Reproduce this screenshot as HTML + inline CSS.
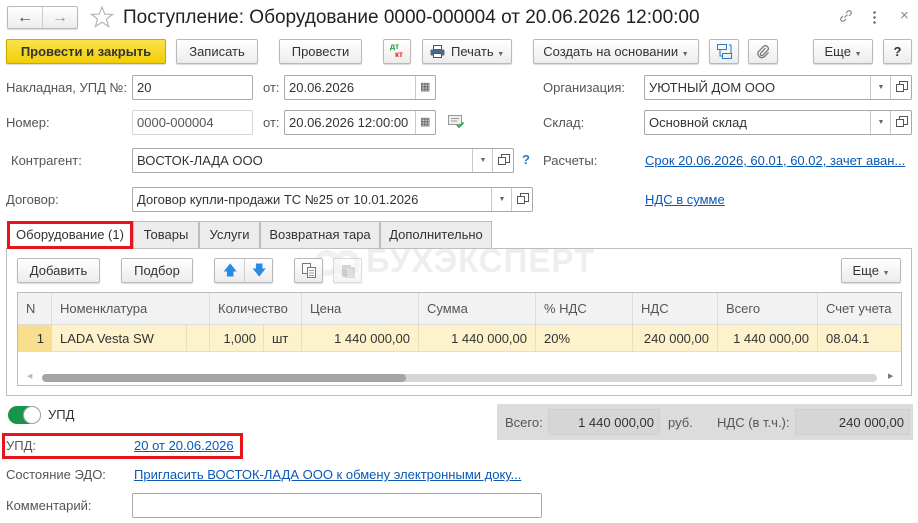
<!DOCTYPE html>
<html><head><meta charset="utf-8"><style>
*{box-sizing:border-box;margin:0;padding:0}
body{width:918px;height:523px;background:#fff;font-family:"Liberation Sans",Arial,sans-serif;font-size:13px;color:#333;position:relative;overflow:hidden}
.a{position:absolute}
.btn{position:absolute;height:25px;border:1px solid #b9b9b9;border-radius:2px;background:linear-gradient(#fff,#ececec);box-shadow:0 1px 1px rgba(0,0,0,.15);text-align:center;line-height:23px;color:#333;font-size:13px}
.inp{position:absolute;height:25px;border:1px solid #a9a9a9;border-radius:2px;background:#fff;line-height:23px;padding-left:4px;color:#333}
.lbl{position:absolute;color:#555;line-height:16px}
.lnk{position:absolute;color:#0b58b5;text-decoration:underline;line-height:16px}
.sep{position:absolute;top:0;bottom:0;border-left:1px solid #c9c9c9}
.dd{position:absolute;top:0;width:20px;height:23px;text-align:center;font-size:7px;color:#666;line-height:23px}
.op{position:absolute;top:5px;width:9px;height:9px;border:1px solid #555}
.op:after{content:"";position:absolute;left:-4px;top:2px;width:6px;height:6px;border:1px solid #555;background:#fff}
.tab{position:absolute;top:221px;height:27px;border:1px solid #bdbdbd;border-bottom:none;background:#ececec;line-height:26px;text-align:center;color:#333}
.th{position:absolute;top:0;height:31px;line-height:31px;padding-left:8px;color:#555;border-right:1px solid #dcdcdc}
.td{position:absolute;top:0;height:27px;line-height:27px;color:#333;border-right:1px solid #e9dfb8}
</style></head><body>

<!-- nav -->
<div class="btn" style="left:7px;top:6px;width:71px;height:23px"></div>
<div class="a" style="left:42px;top:7px;height:21px;border-left:1px solid #ccc"></div>
<div class="a" style="left:17px;top:7px;font-size:16px;color:#444;font-weight:bold;line-height:21px">&#8592;</div>
<div class="a" style="left:52px;top:7px;font-size:16px;color:#999;font-weight:bold;line-height:21px">&#8594;</div>
<svg class="a" style="left:90px;top:6px" width="24" height="22" viewBox="0 0 24 22"><path d="M12 1 L14.8 8.2 L22.5 8.4 L16.4 13.1 L18.6 20.5 L12 16.2 L5.4 20.5 L7.6 13.1 L1.5 8.4 L9.2 8.2 Z" fill="none" stroke="#b5b5b5" stroke-width="1.2"/></svg>
<div class="a" style="left:123px;top:6px;font-size:19px;color:#222;line-height:24px">Поступление: Оборудование 0000-000004 от 20.06.2026 12:00:00</div>
<svg class="a" style="left:838px;top:8px" width="16" height="16" viewBox="0 0 16 16"><path d="M6.5 9.5 L9.5 6.5 M5 8 L3 10 A2.2 2.2 0 0 0 6 13 L8 11 M11 8 L13 6 A2.2 2.2 0 0 0 10 3 L8 5" fill="none" stroke="#888" stroke-width="1.2"/></svg>
<div class="a" style="left:873px;top:10px;width:3px;height:14px;background:radial-gradient(circle,#777 1.2px,transparent 1.5px) 0 0/3px 5px"></div>
<div class="a" style="left:900px;top:7px;font-size:15px;color:#888">×</div>

<!-- toolbar -->
<div class="btn" style="left:6px;top:39px;width:160px;background:linear-gradient(#fbe44a,#f2cd08);border-color:#c9a900;font-weight:bold;color:#333">Провести и закрыть</div>
<div class="btn" style="left:176px;top:39px;width:82px">Записать</div>
<div class="btn" style="left:279px;top:39px;width:83px">Провести</div>
<div class="btn" style="left:383px;top:39px;width:28px"><span class="a" style="left:6px;top:-5px;font-size:8px;color:#1a9a3a;font-weight:bold">дт</span><span class="a" style="left:11px;top:3px;font-size:8px;color:#d22;font-weight:bold">кт</span></div>
<div class="btn" style="left:422px;top:39px;width:90px;text-align:left;padding-left:28px">Печать <span style="font-size:7px;color:#666">▼</span>
<svg class="a" style="left:7px;top:5px" width="15" height="13" viewBox="0 0 15 13"><rect x="3.5" y="0.5" width="8" height="4" fill="#fff" stroke="#456"/><rect x="0.5" y="4.5" width="14" height="6" rx="1" fill="#4a6a8a"/><rect x="3.5" y="8.5" width="8" height="4" fill="#fff" stroke="#456"/></svg></div>
<div class="btn" style="left:533px;top:39px;width:166px">Создать на основании <span style="font-size:7px;color:#666">▼</span></div>
<div class="btn" style="left:709px;top:39px;width:30px"><svg class="a" style="left:7px;top:4px" width="16" height="15" viewBox="0 0 16 15"><rect x="0.5" y="0.5" width="9" height="5" fill="none" stroke="#2a7cc7"/><rect x="5.5" y="9.5" width="9" height="5" fill="none" stroke="#2a7cc7"/><path d="M3 6 V12 H5 M12 1 H14 V9" fill="none" stroke="#2a7cc7"/></svg></div>
<div class="btn" style="left:748px;top:39px;width:30px"><svg class="a" style="left:7px;top:4px" width="15" height="15" viewBox="0 0 15 15"><path d="M9.5 4 L4.5 9.5 A1.5 1.5 0 0 0 6.5 11.5 L12 6 A3 3 0 0 0 8 2 L2.5 7.5 A4 4 0 0 0 8 13 L12.5 8.5" fill="none" stroke="#777" stroke-width="1.3"/></svg></div>
<div class="btn" style="left:813px;top:39px;width:60px">Еще <span style="font-size:7px;color:#666">▼</span></div>
<div class="btn" style="left:883px;top:39px;width:29px;font-weight:bold">?</div>

<!-- row1 -->
<div class="lbl" style="left:6px;top:80px">Накладная, УПД №:</div>
<div class="inp" style="left:132px;top:75px;width:121px">20</div>
<div class="lbl" style="left:263px;top:80px">от:</div>
<div class="inp" style="left:284px;top:75px;width:152px">20.06.2026<div class="sep" style="left:130px"></div><span class="a" style="left:135px;top:0;font-size:11px;color:#555">▦</span></div>
<div class="lbl" style="left:543px;top:80px">Организация:</div>
<div class="inp" style="left:644px;top:75px;width:268px">УЮТНЫЙ ДОМ ООО<div class="sep" style="left:225px"></div><div class="dd" style="left:226px">▼</div><div class="sep" style="left:245px"></div><div class="op" style="left:254px"></div></div>

<!-- row2 -->
<div class="lbl" style="left:6px;top:115px">Номер:</div>
<div class="inp" style="left:132px;top:110px;width:121px;border-color:#d5d5d5;color:#555">0000-000004</div>
<div class="lbl" style="left:263px;top:115px">от:</div>
<div class="inp" style="left:284px;top:110px;width:152px">20.06.2026 12:00:00<div class="sep" style="left:130px"></div><span class="a" style="left:135px;top:0;font-size:11px;color:#555">▦</span></div>
<svg class="a" style="left:448px;top:115px" width="17" height="14" viewBox="0 0 17 14"><rect x="0.5" y="0.5" width="13" height="9" fill="#eee" stroke="#999"/><path d="M3 3.5H11M3 6H9" stroke="#999"/><path d="M9 10 L11 12 L15.5 7.5" fill="none" stroke="#2aa34a" stroke-width="1.8"/></svg>
<div class="lbl" style="left:543px;top:115px">Склад:</div>
<div class="inp" style="left:644px;top:110px;width:268px">Основной склад<div class="sep" style="left:225px"></div><div class="dd" style="left:226px">▼</div><div class="sep" style="left:245px"></div><div class="op" style="left:254px"></div></div>

<!-- row3 -->
<div class="lbl" style="left:11px;top:153px">Контрагент:</div>
<div class="inp" style="left:132px;top:148px;width:382px">ВОСТОК-ЛАДА ООО<div class="sep" style="left:339px"></div><div class="dd" style="left:340px">▼</div><div class="sep" style="left:359px"></div><div class="op" style="left:368px"></div></div>
<div class="a" style="left:522px;top:152px;color:#2a7cc7;font-weight:bold">?</div>
<div class="lbl" style="left:543px;top:153px">Расчеты:</div>
<div class="lnk" style="left:645px;top:153px">Срок 20.06.2026, 60.01, 60.02, зачет аван...</div>

<!-- row4 -->
<div class="lbl" style="left:6px;top:192px">Договор:</div>
<div class="inp" style="left:132px;top:187px;width:401px">Договор купли-продажи ТС №25 от 10.01.2026<div class="sep" style="left:358px"></div><div class="dd" style="left:359px">▼</div><div class="sep" style="left:378px"></div><div class="op" style="left:387px"></div></div>
<div class="lnk" style="left:645px;top:192px">НДС в сумме</div>

<!-- tabs -->
<div class="a" style="left:6px;top:248px;width:906px;height:148px;border:1px solid #bdbdbd"></div>
<div class="tab" style="left:133px;width:66px">Товары</div>
<div class="tab" style="left:199px;width:61px">Услуги</div>
<div class="tab" style="left:260px;width:120px">Возвратная тара</div>
<div class="tab" style="left:380px;width:112px">Дополнительно</div>
<div class="tab" style="left:7px;width:126px;height:28px;background:#fff;border:3px solid #e8141b;line-height:22px;color:#333">Оборудование (1)</div>

<!-- watermark -->
<svg class="a" style="left:312px;top:246px" width="50" height="32" viewBox="0 0 50 32"><circle cx="15" cy="17" r="10" fill="none" stroke="#f0f0f0" stroke-width="6"/><circle cx="35" cy="17" r="10" fill="none" stroke="#f0f0f0" stroke-width="6"/></svg>
<div class="a" style="left:366px;top:243px;font-size:33px;font-weight:bold;color:#eeeeee;letter-spacing:1px;line-height:36px">БУХЭКСПЕРТ</div>

<!-- inner toolbar -->
<div class="btn" style="left:17px;top:258px;width:83px">Добавить</div>
<div class="btn" style="left:121px;top:258px;width:72px">Подбор</div>
<div class="btn" style="left:214px;top:258px;width:59px"><div class="a" style="left:29px;top:0;height:23px;border-left:1px solid #ccc"></div><span class="a" style="left:8px;top:0;color:#2a8ae0;font-size:14px">&#129093;</span><span class="a" style="left:37px;top:0;color:#2a8ae0;font-size:14px">&#129095;</span></div>
<div class="btn" style="left:294px;top:258px;width:29px"><svg class="a" style="left:7px;top:4px" width="15" height="15" viewBox="0 0 15 15"><rect x="0.5" y="0.5" width="8" height="10" fill="#fff" stroke="#777"/><rect x="5.5" y="4.5" width="8" height="10" fill="#fff" stroke="#777"/><path d="M7 7.5H12M7 10H12M7 12.5H12" stroke="#999"/></svg></div>
<div class="btn" style="left:333px;top:258px;width:29px;opacity:.5"><svg class="a" style="left:7px;top:4px" width="15" height="15" viewBox="0 0 15 15"><rect x="1" y="2" width="9" height="12" fill="#aaa"/><rect x="5" y="5" width="8" height="10" fill="#ccc" stroke="#999"/></svg></div>
<div class="btn" style="left:841px;top:258px;width:60px">Еще <span style="font-size:7px;color:#666">▼</span></div>

<!-- table -->
<div class="a" style="left:17px;top:292px;width:885px;height:94px;border:1px solid #bcbcbc;overflow:hidden">
 <div class="a" style="left:0;top:0;width:885px;height:32px;background:#f2f2f2;border-bottom:1px solid #dcdcdc">
  <div class="th" style="left:0;width:34px">N</div>
  <div class="th" style="left:34px;width:158px">Номенклатура</div>
  <div class="th" style="left:192px;width:92px">Количество</div>
  <div class="th" style="left:284px;width:117px">Цена</div>
  <div class="th" style="left:401px;width:117px">Сумма</div>
  <div class="th" style="left:518px;width:97px">% НДС</div>
  <div class="th" style="left:615px;width:85px">НДС</div>
  <div class="th" style="left:700px;width:100px">Всего</div>
  <div class="th" style="left:800px;width:85px;border:none">Счет учета</div>
 </div>
 <div class="a" style="left:0;top:32px;width:885px;height:27px;background:#fcf2cc;border-bottom:1px solid #e6e0c8">
  <div class="td" style="left:0;width:34px;background:#f7df8f;text-align:right;padding-right:7px">1</div>
  <div class="td" style="left:34px;width:135px;padding-left:8px">LADA Vesta SW</div>
  <div class="td" style="left:169px;width:23px"></div>
  <div class="td" style="left:192px;width:54px;text-align:right;padding-right:7px">1,000</div>
  <div class="td" style="left:246px;width:38px;padding-left:8px">шт</div>
  <div class="td" style="left:284px;width:117px;text-align:right;padding-right:8px">1 440 000,00</div>
  <div class="td" style="left:401px;width:117px;text-align:right;padding-right:8px">1 440 000,00</div>
  <div class="td" style="left:518px;width:97px;padding-left:8px">20%</div>
  <div class="td" style="left:615px;width:85px;text-align:right;padding-right:8px">240 000,00</div>
  <div class="td" style="left:700px;width:100px;text-align:right;padding-right:8px">1 440 000,00</div>
  <div class="td" style="left:800px;width:85px;padding-left:8px;border:none">08.04.1</div>
 </div>
 <div class="a" style="left:24px;top:81px;width:835px;height:8px;border-radius:4px;background:#d6d6d6"></div>
 <div class="a" style="left:24px;top:81px;width:364px;height:8px;border-radius:4px;background:#a5a5a5"></div>
 <div class="a" style="left:9px;top:79px;font-size:7px;color:#bbb">◀</div>
 <div class="a" style="left:870px;top:79px;font-size:7px;color:#777">▶</div>
</div>

<!-- bottom -->
<div class="a" style="left:8px;top:406px;width:33px;height:18px;border-radius:9px;background:#17954a"></div>
<div class="a" style="left:23px;top:406px;width:18px;height:18px;border-radius:9px;background:#fff;border:1px solid #aaa"></div>
<div class="a" style="left:48px;top:407px;color:#333">УПД</div>
<div class="a" style="left:497px;top:404px;width:416px;height:36px;background:#dcdcdc"></div>
<div class="a" style="left:548px;top:409px;width:112px;height:26px;background:#d6d6d6;border:1px solid #cfcfcf;border-radius:2px"></div>
<div class="a" style="left:795px;top:409px;width:115px;height:26px;background:#d6d6d6;border:1px solid #cfcfcf;border-radius:2px"></div>
<div class="lbl" style="left:505px;top:415px">Всего:</div>
<div class="a" style="left:548px;top:415px;width:106px;text-align:right;color:#333">1 440 000,00</div>
<div class="lbl" style="left:668px;top:415px">руб.</div>
<div class="lbl" style="left:717px;top:415px">НДС (в т.ч.):</div>
<div class="a" style="left:795px;top:415px;width:109px;text-align:right;color:#333">240 000,00</div>

<div class="a" style="left:2px;top:433px;width:241px;height:26px;border:3px solid #e8141b"></div>
<div class="lbl" style="left:6px;top:438px">УПД:</div>
<div class="lnk" style="left:134px;top:438px">20 от 20.06.2026</div>
<div class="lbl" style="left:6px;top:467px">Состояние ЭДО:</div>
<div class="lnk" style="left:134px;top:467px">Пригласить ВОСТОК-ЛАДА ООО к обмену электронными доку...</div>
<div class="lbl" style="left:6px;top:498px">Комментарий:</div>
<div class="inp" style="left:132px;top:493px;width:410px"></div>
</body></html>
